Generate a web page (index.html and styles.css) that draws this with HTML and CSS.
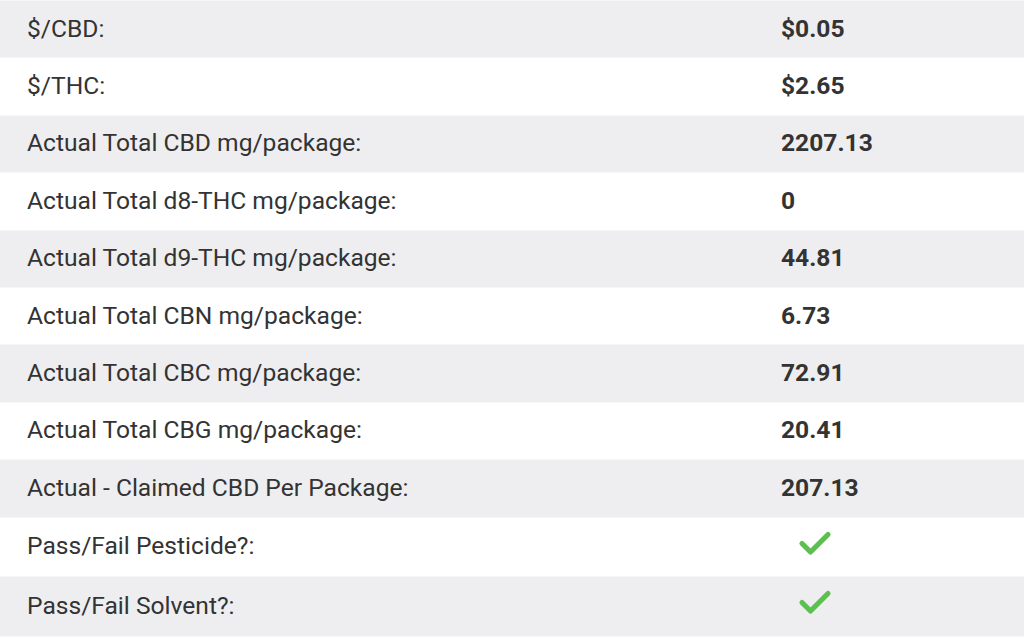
FILE: index.html
```html
<!DOCTYPE html>
<html>
<head>
<meta charset="utf-8">
<link rel="stylesheet" href="styles.css">
</head>
<body>
<div class="table">
  <div class="row odd"><div class="label">$/CBD:</div><div class="value">$0.05</div></div>
  <div class="row"><div class="label">$/THC:</div><div class="value">$2.65</div></div>
  <div class="row odd"><div class="label">Actual Total CBD mg/package:</div><div class="value">2207.13</div></div>
  <div class="row"><div class="label">Actual Total d8-THC mg/package:</div><div class="value">0</div></div>
  <div class="row odd"><div class="label">Actual Total d9-THC mg/package:</div><div class="value">44.81</div></div>
  <div class="row"><div class="label">Actual Total CBN mg/package:</div><div class="value">6.73</div></div>
  <div class="row odd"><div class="label">Actual Total CBC mg/package:</div><div class="value">72.91</div></div>
  <div class="row"><div class="label">Actual Total CBG mg/package:</div><div class="value">20.41</div></div>
  <div class="row odd"><div class="label">Actual - Claimed CBD Per Package:</div><div class="value">207.13</div></div>
  <div class="row tall"><div class="label">Pass/Fail Pesticide?:</div><div class="value"><svg class="check" viewBox="0 0 34 26" width="34" height="26"><path d="M4 13.5 L12.5 22 L30 4.5" fill="none" stroke="#5bc04f" stroke-width="5.2" stroke-linecap="round" stroke-linejoin="round"/></svg></div></div>
  <div class="row tall odd"><div class="label">Pass/Fail Solvent?:</div><div class="value"><svg class="check" viewBox="0 0 34 26" width="34" height="26"><path d="M4 13.5 L12.5 22 L30 4.5" fill="none" stroke="#5bc04f" stroke-width="5.2" stroke-linecap="round" stroke-linejoin="round"/></svg></div></div>
</div>
</body>
</html>
```

FILE: styles.css
```css
html, body {
  margin: 0;
  padding: 0;
  background: #ffffff;
}
body {
  font-family: Roboto, "Liberation Sans", sans-serif;
  color: #333333;
}
.table {
  display: flex;
  flex-direction: column;
  border-bottom: 1px solid #f6f6f7;
}
.row {
  display: flex;
  align-items: center;
  height: 56.4px;
  border-top: 1px solid #f6f6f7;
  background: #ffffff;
}
.row.odd {
  background: #eeeef0;
}
.row.tall {
  height: 58.5px;
}
.label {
  width: 754px;
  padding-left: 27px;
  padding-bottom: 1px;
  font-size: 24.6px;
  line-height: 28px;
}
.value {
  font-size: 24.6px;
  line-height: 28px;
  padding-bottom: 1px;
  font-weight: 700;
  display: flex;
  align-items: center;
}
.check {
  display: block;
  margin-left: 17px;
  margin-bottom: 7px;
}
```
